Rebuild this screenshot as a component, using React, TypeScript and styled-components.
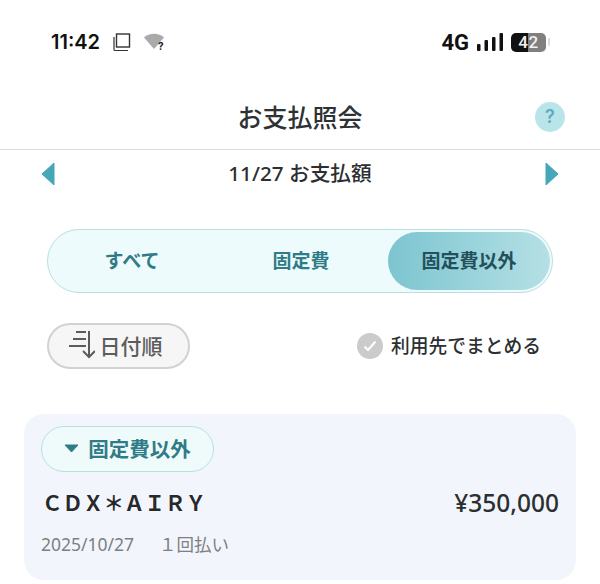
import React from 'react';
import styled, { createGlobalStyle } from 'styled-components';

const GlobalStyle = createGlobalStyle`
  html, body {
    margin: 0;
    padding: 0;
    background: #fff;
  }
  body {
    font-family: "Noto Sans", "Noto Sans CJK JP", sans-serif;
    color: #2c2f31;
  }
`;

const Page = styled.div`
  width: 600px;
  height: 584px;
  overflow: hidden;
  background: #fff;
`;

const StatusBar = styled.div`
  height: 84px;
  box-sizing: border-box;
  padding: 0 50px 0 51px;
  display: flex;
  align-items: center;
  justify-content: space-between;
  color: #111;
`;

const StatusGroup = styled.div`
  display: flex;
  align-items: center;
`;

const Time = styled.span`
  font-family: "Inter", sans-serif;
  font-size: 20px;
  font-weight: 600;
  margin-right: 12px;
`;

const Network = styled.span`
  font-family: "Roboto", sans-serif;
  font-size: 22px;
  font-weight: 700;
  margin-right: 8px;
`;

const Battery = styled.span`
  width: 35px;
  height: 19px;
  border-radius: 5px;
  background: linear-gradient(90deg, #111 0 48%, #808080 48% 100%);
  color: #f2f2f2;
  font-family: "Roboto", sans-serif;
  font-size: 17px;
  font-weight: 500;
  letter-spacing: 0.5px;
  line-height: 19px;
  text-align: center;
`;

const BatteryTip = styled.span`
  width: 2px;
  height: 8px;
  margin-left: 2px;
  border-radius: 1px;
  background: #ddd;
`;

const Header = styled.header`
  height: 66px;
  box-sizing: border-box;
  padding: 0 35px 0 0;
  display: grid;
  grid-template-columns: 30px 1fr 30px;
  align-items: center;
  border-bottom: 1px solid #dcdcdc;
`;

const Title = styled.h1`
  grid-column: 2;
  margin: 0;
  padding: 0 0 1px 35px;
  font-size: 25px;
  font-weight: 500;
  text-align: center;
  color: #2f3234;
`;

const HelpButton = styled.span`
  grid-column: 3;
  width: 30px;
  height: 30px;
  border-radius: 50%;
  background: #b9e5ea;
  color: #5aacbd;
  font-family: "Inter", sans-serif;
  font-size: 18px;
  font-weight: 600;
  line-height: 30px;
  text-align: center;
`;

const MonthRow = styled.div`
  height: 47px;
  box-sizing: border-box;
  padding: 0 41px;
  display: flex;
  align-items: center;
  justify-content: space-between;
`;

const MonthLabel = styled.span`
  padding-bottom: 4px;
  font-size: 20.7px;
  font-weight: 500;
  color: #2c2f31;
`;

const Segment = styled.div`
  margin: 32px 47px 0;
  height: 64px;
  box-sizing: border-box;
  padding: 2px;
  display: grid;
  grid-template-columns: 164px 174px 1fr;
  align-items: stretch;
  border: 1px solid #b9dfe0;
  border-radius: 32px;
  background: #eefbfd;
`;

const SegmentItem = styled.div<{ $active?: boolean }>`
  display: flex;
  align-items: center;
  justify-content: center;
  padding-bottom: 2px;
  border-radius: 29px;
  font-size: 19px;
  font-weight: 700;
  color: ${({ $active }) => ($active ? '#24505c' : '#2f7c88')};
  background: ${({ $active }) =>
    $active ? 'linear-gradient(90deg, #7cc5d0 0%, #b5e0e5 100%)' : 'transparent'};
`;

const Controls = styled.div`
  margin: 30px 59px 0 47px;
  height: 46px;
  display: flex;
  align-items: center;
  justify-content: space-between;
`;

const SortButton = styled.div`
  width: 143px;
  height: 46px;
  box-sizing: border-box;
  padding: 0 7px 3px 0;
  display: flex;
  align-items: center;
  justify-content: center;
  gap: 5px;
  border: 2px solid #d2d2d2;
  border-radius: 23px;
  background: #f6f6f6;
  color: #5c5c5c;
  font-size: 21px;
  font-weight: 500;
`;

const GroupToggle = styled.div`
  display: flex;
  align-items: center;
  gap: 8px;
  line-height: 26px;
  font-size: 18.75px;
  font-weight: 500;
  color: #2c2f31;
`;

const CheckCircle = styled.span`
  width: 26px;
  height: 26px;
  border-radius: 50%;
  background: #cbcbcb;
  display: flex;
  align-items: center;
  justify-content: center;
`;

const Card = styled.section`
  margin: 45px 24px 0;
  height: 166px;
  box-sizing: border-box;
  padding: 12px 17px 0;
  border-radius: 20px;
  background: #f2f6fc;
`;

const CategoryBadge = styled.div`
  width: 173px;
  height: 46px;
  box-sizing: border-box;
  padding-bottom: 2px;
  display: flex;
  align-items: center;
  justify-content: center;
  gap: 9px;
  border: 1px solid #b9dfe0;
  border-radius: 23px;
  background: #effbfb;
  color: #2f7c88;
  font-size: 20.5px;
  font-weight: 700;
`;

const PaymentRow = styled.div`
  margin-top: 14px;
  display: flex;
  align-items: center;
  justify-content: space-between;
`;

const Merchant = styled.span`
  padding: 0 0 2px 1px;
  font-family: "Noto Sans CJK JP", sans-serif;
  font-size: 20.5px;
  font-weight: 700;
  line-height: 32px;
  color: #26282a;
`;

const Amount = styled.span`
  font-size: 24.5px;
  font-weight: 500;
  line-height: 34px;
  color: #2c2f31;
`;

const PaymentMeta = styled.div`
  margin-top: 12px;
  display: flex;
  gap: 25px;
  font-size: 17.5px;
  line-height: 24px;
  color: #7d8083;
`;

function CopyIcon() {
  return (
    <svg width="19" height="19" viewBox="0 0 19 19" fill="none" stroke="#333" style={{ marginRight: 13 }}>
      <rect x="4.5" y="1" width="13" height="13" strokeWidth="1.4" />
      <path d="M2 4v12.5a1 1 0 0 0 1 1h13" strokeWidth="1.2" />
    </svg>
  );
}

function WifiIcon() {
  return (
    <svg width="22" height="18" viewBox="0 0 22 18">
      <path d="M0 4.5C5 -0.5 15 -0.5 20 4.5L10 16Z" fill="#aaa" />
      <text x="14" y="17" fontSize="10" fontWeight="700" fontFamily="Inter, sans-serif" fill="#222">?</text>
    </svg>
  );
}

function SignalIcon() {
  return (
    <svg width="26" height="18" viewBox="0 0 26 18" fill="#111" style={{ marginRight: 8 }}>
      <rect x="0" y="11" width="3.5" height="7" rx="1" />
      <rect x="7.5" y="7" width="3.5" height="11" rx="1" />
      <rect x="15" y="4" width="3.5" height="14" rx="1" />
      <rect x="22.5" y="0" width="3.5" height="18" rx="1" />
    </svg>
  );
}

function Arrow({ right }: { right?: boolean }) {
  return (
    <svg width="14" height="24" viewBox="0 0 14 24">
      <path
        d={right ? 'M1 1L13 12L1 23Z' : 'M13 1L1 12L13 23Z'}
        fill="#45a7b8"
        stroke="#45a7b8"
        strokeLinejoin="round"
      />
    </svg>
  );
}

function SortIcon() {
  return (
    <svg width="27" height="29" viewBox="0 0 27 29" fill="none" stroke="#5c5c5c" strokeWidth="2">
      <path d="M8 2h10M5 9h13M1 16h17" />
      <path d="M21 1v26M15 21l6 6 6-6" />
    </svg>
  );
}

function CheckIcon() {
  return (
    <svg width="14" height="12" viewBox="0 0 14 12" fill="none" stroke="#fff" strokeWidth="2">
      <path d="M1.5 6.5L5 10L12.5 1.5" />
    </svg>
  );
}

function CaretIcon() {
  return (
    <svg width="15" height="9" viewBox="0 0 15 9">
      <path d="M1 1H14L7.5 8Z" fill="#2f7c88" stroke="#2f7c88" strokeLinejoin="round" />
    </svg>
  );
}

export default function App() {
  return (
    <Page>
      <GlobalStyle />
      <StatusBar>
        <StatusGroup>
          <Time>11:42</Time>
          <CopyIcon />
          <WifiIcon />
        </StatusGroup>
        <StatusGroup>
          <Network>4G</Network>
          <SignalIcon />
          <Battery>42</Battery>
          <BatteryTip />
        </StatusGroup>
      </StatusBar>
      <Header>
        <Title>お支払照会</Title>
        <HelpButton>?</HelpButton>
      </Header>
      <MonthRow>
        <Arrow />
        <MonthLabel>11/27 お支払額</MonthLabel>
        <Arrow right />
      </MonthRow>
      <Segment>
        <SegmentItem>すべて</SegmentItem>
        <SegmentItem>固定費</SegmentItem>
        <SegmentItem $active>固定費以外</SegmentItem>
      </Segment>
      <Controls>
        <SortButton>
          <SortIcon />
          日付順
        </SortButton>
        <GroupToggle>
          <CheckCircle>
            <CheckIcon />
          </CheckCircle>
          利用先でまとめる
        </GroupToggle>
      </Controls>
      <Card>
        <CategoryBadge>
          <CaretIcon />
          固定費以外
        </CategoryBadge>
        <PaymentRow>
          <Merchant>ＣＤＸ＊ＡＩＲＹ</Merchant>
          <Amount>¥350,000</Amount>
        </PaymentRow>
        <PaymentMeta>
          <span>2025/10/27</span>
          <span>１回払い</span>
        </PaymentMeta>
      </Card>
    </Page>
  );
}
